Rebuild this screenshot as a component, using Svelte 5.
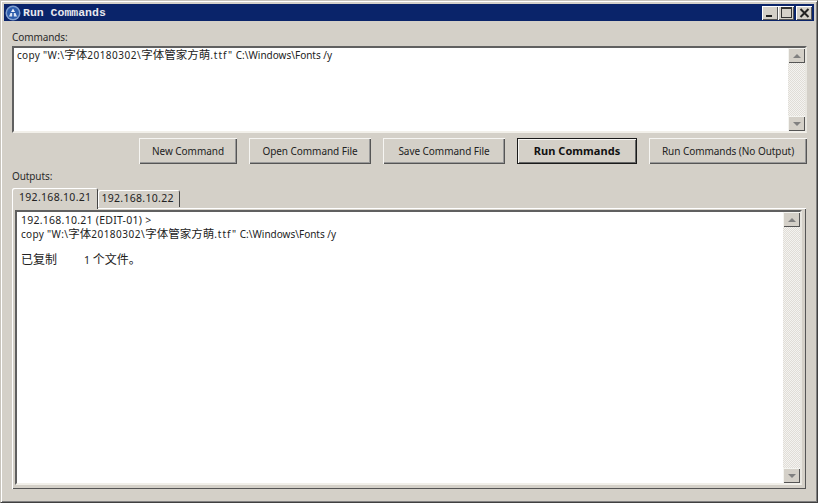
<script lang="ts">
  const buttons = [
    { label: "New Command", width: 98 },
    { label: "Open Command File", width: 122 },
    { label: "Save Command File", width: 122 },
    { label: "Run Commands", width: 120, primary: true },
    { label: "Run Commands (No Output)", width: 158 }
  ];
  const tabs = ["192.168.10.21", "192.168.10.22"];
</script>

{#snippet scrollbar()}
  <div class="scrollbar">
    <div class="arrow"><span class="tri up"></span></div>
    <div class="track"></div>
    <div class="arrow"><span class="tri down"></span></div>
  </div>
{/snippet}

{#snippet command()}
  <span class="wide">copy "W:\</span><span class="cjk">字体</span><span class="digits">20180302\</span><span class="cjk">字体管家方萌</span><span class="ext">.ttf"</span> C:\Windows\Fonts /y
{/snippet}

<div class="window">
  <header class="titlebar">
    <svg class="app-icon" width="16" height="16" viewBox="0 0 16 16">
      <circle cx="8" cy="8" r="7.5" fill="#7f9fd0" />
      <circle cx="8" cy="8" r="6" fill="#2c5cab" />
      <path d="M8 3.5 L10 7 H6 Z" fill="#eef2fa" />
      <path d="M4 11.5 L5.5 8 H7.2 V11.5 Z M8.8 11.5 V8 H10.5 L12 11.5 Z" fill="#dfe7f5" />
    </svg>
    <span class="title">Run Commands</span>
    <div class="controls">
      <button class="ctl" aria-label="Minimize"><span class="min"></span></button>
      <button class="ctl" aria-label="Maximize"><span class="max"></span></button>
      <button class="ctl close" aria-label="Close">
        <svg width="11" height="10" viewBox="0 0 11 10"><path d="M1.5 1 L9.5 9 M9.5 1 L1.5 9" stroke="#222" stroke-width="2" /></svg>
      </button>
    </div>
  </header>

  <main class="content">
    <div class="label">Commands:</div>
    <div class="sunken commands">
      <div class="text">
        <div class="line">{@render command()}</div>
      </div>
      {@render scrollbar()}
    </div>

    <div class="actions">
      {#each buttons as b}
        <button class="btn" class:primary={b.primary} style="width: {b.width}px">{b.label}</button>
      {/each}
    </div>

    <div class="label outputs-label">Outputs:</div>
    <div class="tabs">
      {#each tabs as t, i}
        <div class="tab" class:active={i === 0}>{t}</div>
      {/each}
    </div>
    <div class="page">
      <div class="sunken output">
        <div class="text">
          <div class="line host">192.168.10.21 (EDIT-01) &gt;</div>
          <div class="line">{@render command()}</div>
          <div class="line result"><span class="cjk">已复制</span><span class="count">1</span> <span class="cjk">个文件。</span></div>
        </div>
        {@render scrollbar()}
      </div>
    </div>
  </main>
</div>

<style>
  :global(body) {
    margin: 0;
    background: #d4d0c8;
  }

  .window {
    width: 818px;
    height: 503px;
    box-sizing: border-box;
    display: flex;
    flex-direction: column;
    background: #d4d0c8;
    border: 1px solid #c8c4bc;
    border-right-color: #404040;
    border-bottom-color: #404040;
    box-shadow: inset 1px 1px 0 #fff, inset -1px -1px 0 #808080;
    padding: 3px;
    font-family: "Noto Sans", "Noto Sans CJK SC", sans-serif;
    font-size: 10px;
    color: #222;
    overflow: hidden;
  }

  .titlebar {
    height: 17px;
    flex: none;
    display: flex;
    align-items: center;
    background: #0a246a;
    padding-left: 1px;
    color: #fff;
  }

  .app-icon {
    flex: none;
  }

  .title {
    margin-left: 2px;
    font-family: "Liberation Mono", monospace;
    font-weight: bold;
    font-size: 11.5px;
    color: #e8e8ee;
  }

  .controls {
    margin-left: auto;
    display: flex;
    padding-right: 2px;
  }

  .ctl {
    width: 16px;
    height: 14px;
    padding: 0;
    border: none;
    background: #d4d0c8;
    box-shadow: inset 1px 1px 0 #fff, inset -1px -1px 0 #555;
    display: flex;
    align-items: center;
    justify-content: center;
  }

  .close {
    margin-left: 2px;
  }

  .min {
    width: 6px;
    height: 2px;
    background: #222;
    margin-top: 7px;
    margin-right: 2px;
  }

  .max {
    width: 9px;
    height: 8px;
    border: 1px solid #333;
    border-top-width: 2px;
  }

  .content {
    flex: 1;
    display: flex;
    flex-direction: column;
    padding: 0 0 0 8px;
    min-height: 0;
  }

  .label {
    height: 14px;
    line-height: 14px;
    margin-top: 9px;
    letter-spacing: -0.1px;
    color: #2a2a2a;
  }

  .sunken {
    display: flex;
    background: #fff;
    border: 2px solid;
    border-color: #606060 #e8e6e0 #f2f0ea #606060;
    box-sizing: border-box;
  }

  .commands {
    height: 87px;
    margin-top: 2px;
    width: 795px;
  }

  .text {
    flex: 1;
    padding: 0 3px;
    color: #222;
  }

  .output .text {
    padding: 2px 4px;
  }

  .line {
    height: 13px;
    line-height: 13px;
    white-space: nowrap;
  }

  .cjk {
    font-size: 11.5px;
    line-height: 13px;
  }

  .wide {
    letter-spacing: 0.3px;
  }

  .digits {
    letter-spacing: 0.5px;
  }

  .ext {
    letter-spacing: 1px;
  }

  .scrollbar {
    width: 17px;
    flex: none;
    display: flex;
    flex-direction: column;
    background: #d4d0c8;
  }

  .track {
    flex: 1;
    background-image: repeating-conic-gradient(#e0ddd7 0 25%, #f4f3f0 0 50%);
    background-size: 2px 2px;
  }

  .arrow {
    height: 15px;
    flex: none;
    background: #d4d0c8;
    box-shadow: inset 1px 1px 0 #f4f4f0, inset -1px -1px 0 #555;
    display: flex;
    align-items: center;
    justify-content: center;
  }

  .tri {
    width: 0;
    height: 0;
    border-left: 4px solid transparent;
    border-right: 4px solid transparent;
  }

  .tri.up {
    border-bottom: 4px solid #808080;
  }

  .tri.down {
    border-top: 4px solid #808080;
  }

  .actions {
    display: flex;
    justify-content: flex-end;
    gap: 12px;
    margin-top: 5px;
    width: 795px;
  }

  .btn {
    height: 26px;
    padding: 0;
    box-sizing: border-box;
    background: #d4d0c8;
    border: none;
    box-shadow: inset 1px 1px 0 #f6f5f2, inset -1px -1px 0 #555, inset -2px -2px 0 #999;
    font: inherit;
    letter-spacing: -0.05px;
    color: #222;
  }

  .btn.primary {
    font-weight: bold;
    font-size: 11px;
    letter-spacing: 0.05px;
    padding-bottom: 2px;
    color: #111;
    box-shadow: inset 0 0 0 1px #1a1a1a, inset 2px 2px 0 #f6f5f2, inset -2px -2px 0 #666;
  }

  .outputs-label {
    margin-top: 5px;
  }

  .tabs {
    display: flex;
    align-items: flex-end;
    height: 21px;
    margin-top: 4px;
    position: relative;
    z-index: 1;
  }

  .tab {
    height: 17px;
    line-height: 17px;
    padding: 0 6px 0 3px;
    background: #d4d0c8;
    border-radius: 2px 2px 0 0;
    box-shadow: inset 1px 1px 0 #fff, inset -1px 0 0 #444;
    font-size: 10.5px;
    letter-spacing: 0.3px;
    margin-bottom: 1px;
  }

  .tab.active {
    height: 21px;
    line-height: 18px;
    margin-bottom: -1px;
    padding: 0 7px;
  }

  .page {
    height: 281px;
    box-sizing: border-box;
    width: 794px;
    padding: 2px 4px 4px 3px;
    box-shadow: inset 1px 1px 0 #fff, inset -1px -1px 0 #555;
  }

  .output {
    height: 100%;
  }

  .host {
    font-size: 10.5px;
    letter-spacing: 0.25px;
  }

  .result {
    margin-top: 13px;
    height: 14px;
  }

  .result .cjk {
    font-size: 12px;
  }

  .count {
    margin-left: 27px;
    font-size: 10.5px;
  }
</style>
